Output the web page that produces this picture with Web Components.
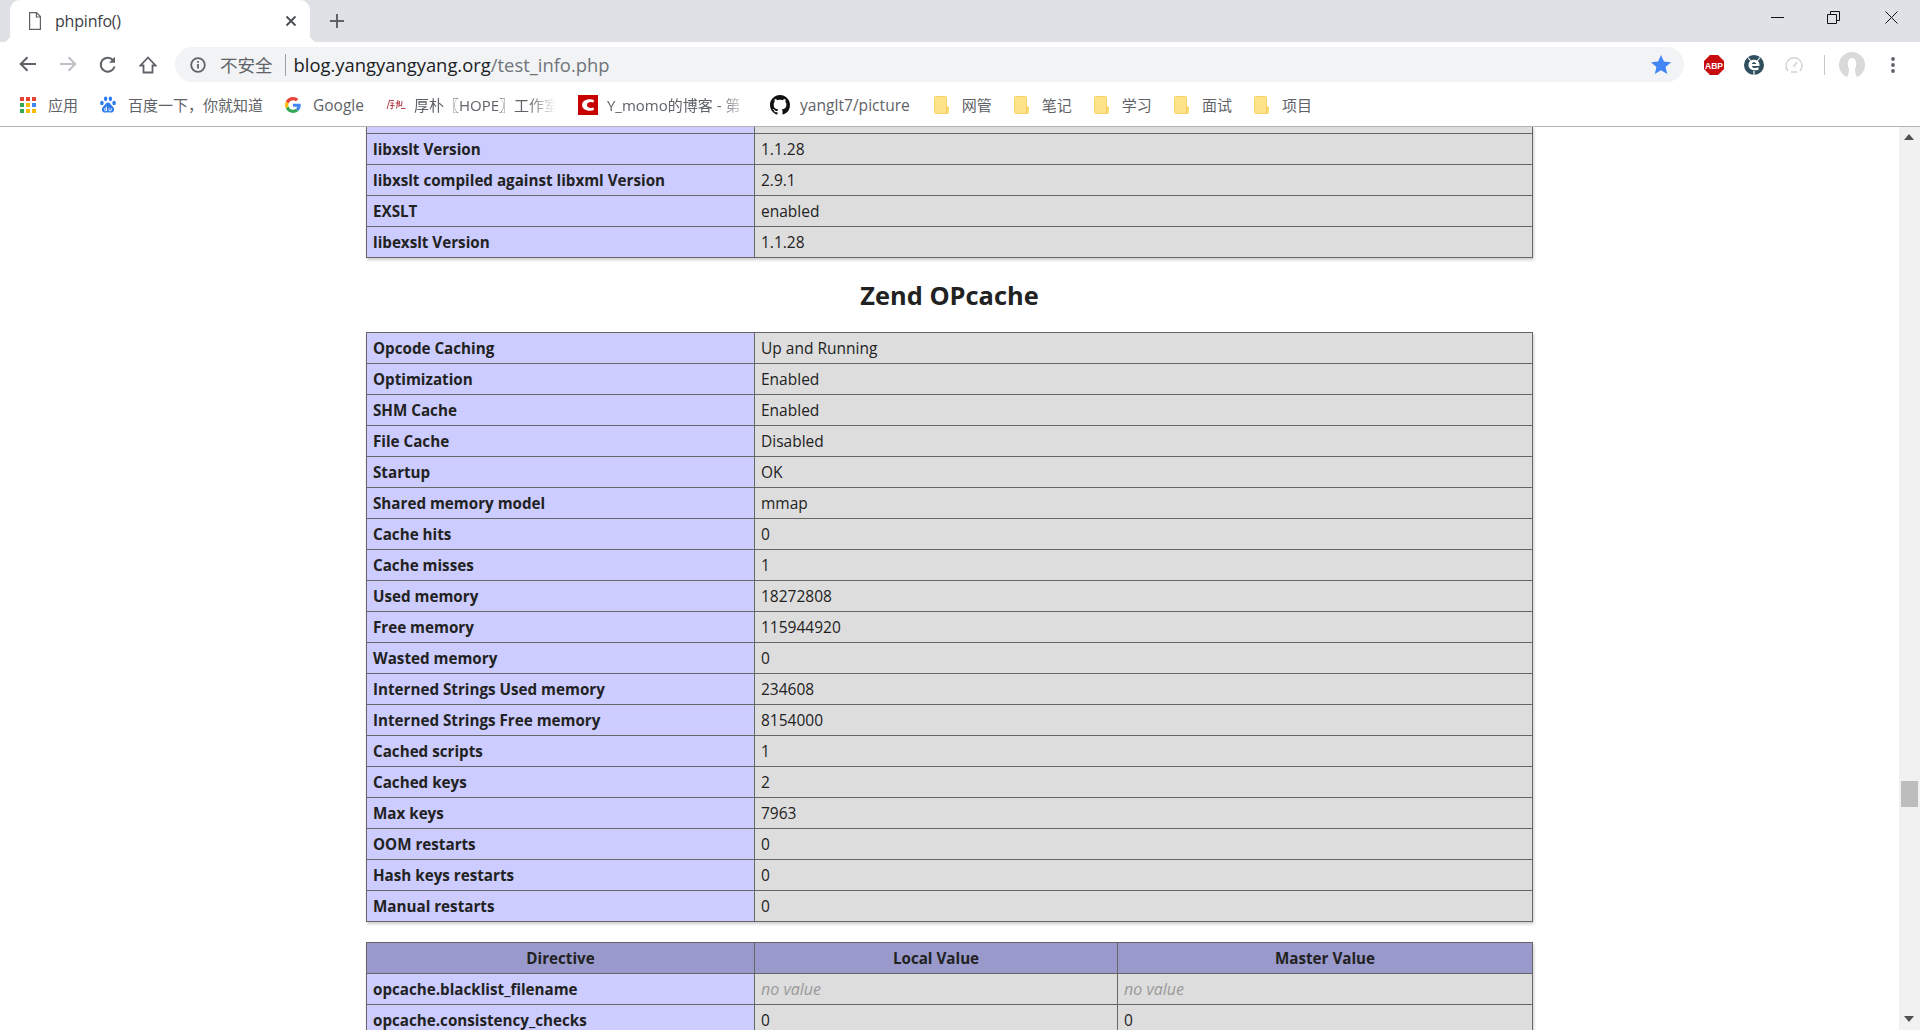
<!DOCTYPE html>
<html>
<head>
<meta charset="utf-8">
<title>phpinfo()</title>
<style>
html, body { margin: 0; height: 100%; overflow: hidden; background: #fff; }
body { display: flex; flex-direction: column; font-family: "Open Sans", "Noto Sans CJK SC", sans-serif; }
php-row i { color: #999; font-size: 16px; }
</style>
</head>
<body>

<tab-strip></tab-strip>
<nav-toolbar></nav-toolbar>
<bookmark-bar>
   <bookmark-item label="应用"><svg width="16" height="16" viewBox="0 0 16 16"><rect x="0" y="0" width="4" height="4" fill="#ea4335"/><rect x="6" y="0" width="4" height="4" fill="#ea4335"/><rect x="12" y="0" width="4" height="4" fill="#ea4335"/><rect x="0" y="6" width="4" height="4" fill="#34a853"/><rect x="6" y="6" width="4" height="4" fill="#fbbc05"/><rect x="12" y="6" width="4" height="4" fill="#4285f4"/><rect x="0" y="12" width="4" height="4" fill="#34a853"/><rect x="6" y="12" width="4" height="4" fill="#fbbc05"/><rect x="12" y="12" width="4" height="4" fill="#fbbc05"/></svg></bookmark-item>
   <bookmark-item label="百度一下，你就知道"><svg width="16" height="17" viewBox="0 0 16 17" fill="#2f7cf0"><ellipse cx="5.600" cy="2.800" rx="1.700" ry="2.400"/><ellipse cx="10.400" cy="2.800" rx="1.700" ry="2.400"/><ellipse cx="1.900" cy="7" rx="1.800" ry="2.300"/><ellipse cx="14.100" cy="7" rx="1.800" ry="2.300"/><path d="M8 6.500c-2 0-2.600 2-4 3.200C2.500 11 1.800 12.300 2 14c.2 1.800 1.800 2.700 3.400 2.600 1 0 1.800-.4 2.600-.4s1.600.4 2.600.4c1.600.1 3.200-.8 3.400-2.600.2-1.700-.5-3-2-4.300C10.600 8.500 10 6.500 8 6.500z"/><path d="M4.800 12.300h1.700v2.400H4.800zM6.500 10.500v4.200M9 12v2.700h2.200V12" stroke="#fff" stroke-width=".8" fill="none"/></svg></bookmark-item>
   <bookmark-item label="Google" size="15.5"><svg width="16" height="16" viewBox="0 0 48 48"><path fill="#ea4335" d="M24 9.500c3.500 0 6.700 1.200 9.200 3.600l6.900-6.900C35.900 2.400 30.500 0 24 0 14.600 0 6.500 5.400 2.600 13.200l8 6.200C12.500 13.600 17.800 9.500 24 9.500z"/><path fill="#4285f4" d="M47 24.500c0-1.600-.1-3.100-.4-4.500H24v9h12.900c-.6 3-2.200 5.500-4.800 7.200l7.700 6C44.300 38 47 31.800 47 24.500z"/><path fill="#fbbc05" d="M10.600 28.600c-.5-1.400-.8-3-.8-4.600s.3-3.200.8-4.600l-8-6.200C.9 16.500 0 20.100 0 24s.9 7.500 2.600 10.800l8-6.200z"/><path fill="#34a853" d="M24 48c6.500 0 11.900-2.100 15.800-5.800l-7.700-6c-2.100 1.400-4.900 2.300-8.100 2.300-6.200 0-11.500-4.100-13.400-9.900l-8 6.200C6.500 42.600 14.600 48 24 48z"/></svg></bookmark-item>
   <bookmark-item label="厚朴〖HOPE〗工作室" fade="142" gap="8"><svg width="20" height="11" viewBox="0 0 20 11" fill="none" stroke="#b8404a" stroke-width="1"><path d="M3 1.500h5M3.500 1.500L1 10M4.500 4h3l-1.500 1.500M4 6.500h4.500M6.500 5.500l-.5 4.500L4.500 9.500M12 1l-1.500 8.500M9.500 4h4.500M13.500 2l-.7 6M12.800 6l3 1M16 2l-.5 5M15 9.500h4.500"/></svg></bookmark-item>
   <bookmark-item label="Y_momo的博客 - 第" fade="141" gap="9"><svg width="20" height="20" viewBox="0 0 20 20"><rect width="20" height="20" fill="#c80000"/><path d="M16 5C12.500 3.500 4.500 4 4 10c.5 6 8.500 6.500 12 5l-.5-2.500c-2.500 1-6.500.7-6.500-2.500s4-3.500 6.500-2.500z" fill="#fff"/></svg></bookmark-item>
   <bookmark-item label="yanglt7/picture" size="15.6" gap="10" style="margin-right: 2px"><svg width="20" height="20" viewBox="0 0 16 16" fill="#111"><path d="M8 0C3.580 0 0 3.580 0 8c0 3.540 2.290 6.530 5.470 7.590.4.070.55-.17.55-.38 0-.19-.01-.82-.01-1.490-2.010.37-2.530-.49-2.690-.94-.09-.23-.48-.94-.82-1.130-.28-.15-.68-.52-.01-.53.630-.01 1.080.58 1.230.82.720 1.210 1.870.87 2.330.66.070-.52.28-.87.510-1.070-1.780-.2-3.640-.89-3.640-3.950 0-.87.310-1.590.820-2.150-.08-.2-.36-1.020.08-2.120 0 0 .67-.21 2.200.82.640-.18 1.320-.27 2-.27s1.360.09 2 .27c1.530-1.040 2.200-.82 2.200-.82.440 1.100.16 1.920.08 2.120.51.560.82 1.270.82 2.150 0 3.070-1.870 3.750-3.650 3.950.29.250.54.730.54 1.480 0 1.070-.01 1.930-.01 2.200 0 .21.150.46.550.38A8.010 8.010 0 0 0 16 8c0-4.420-3.580-8-8-8z"/></svg></bookmark-item>
   <folder-item>网管</folder-item>
   <folder-item>笔记</folder-item>
   <folder-item>学习</folder-item>
   <folder-item>面试</folder-item>
   <folder-item>项目</folder-item>
</bookmark-bar>

<page-view>
   <php-table cols="388px 1fr" style="margin-top: -1px">
      <php-row></php-row>
      <php-row label="libxslt Version">1.1.28</php-row>
      <php-row label="libxslt compiled against libxml Version">2.9.1</php-row>
      <php-row label="EXSLT">enabled</php-row>
      <php-row label="libexslt Version">1.1.28</php-row>
   </php-table>
   <php-heading>Zend OPcache</php-heading>
   <php-table cols="388px 1fr">
      <php-row label="Opcode Caching">Up and Running</php-row>
      <php-row label="Optimization">Enabled</php-row>
      <php-row label="SHM Cache">Enabled</php-row>
      <php-row label="File Cache">Disabled</php-row>
      <php-row label="Startup">OK</php-row>
      <php-row label="Shared memory model">mmap</php-row>
      <php-row label="Cache hits">0</php-row>
      <php-row label="Cache misses">1</php-row>
      <php-row label="Used memory">18272808</php-row>
      <php-row label="Free memory">115944920</php-row>
      <php-row label="Wasted memory">0</php-row>
      <php-row label="Interned Strings Used memory">234608</php-row>
      <php-row label="Interned Strings Free memory">8154000</php-row>
      <php-row label="Cached scripts">1</php-row>
      <php-row label="Cached keys">2</php-row>
      <php-row label="Max keys">7963</php-row>
      <php-row label="OOM restarts">0</php-row>
      <php-row label="Hash keys restarts">0</php-row>
      <php-row label="Manual restarts">0</php-row>
   </php-table>
   <php-table cols="388px 363px 1fr" style="margin-top: 20px">
      <php-row head label="Directive"><span>Local Value</span><span>Master Value</span></php-row>
      <php-row label="opcache.blacklist_filename"><i>no value</i><i>no value</i></php-row>
      <php-row label="opcache.consistency_checks"><span>0</span><span>0</span></php-row>
   </php-table>
</page-view>

<script>
// Tab strip with the single tab and the window buttons
class TabStrip extends HTMLElement {
   constructor() {
      super();
      this.attachShadow({ mode: "open" });
      this.shadowRoot.innerHTML = `
         <style>
         :host { display: flex; flex: none; height: 42px; background: #dee1e6; padding-left: 10px; color: #3c4043; }
         .tab { position: relative; width: 300px; background: #fff; border-radius: 10px 10px 0 0; display: flex; align-items: center; box-sizing: border-box; padding: 0 13px 0 19px; }
         .tab::before, .tab::after { content: ""; position: absolute; bottom: 0; width: 8px; height: 8px; }
         .tab::before { left: -8px; background: radial-gradient(circle at 0 0, transparent 8px, #fff 8.5px); }
         .tab::after { right: -8px; background: radial-gradient(circle at 100% 0, transparent 8px, #fff 8.5px); }
         .title { flex: 1; margin-left: 14px; font-size: 16px; letter-spacing: -.2px; }
         .plus { margin: 13px 0 0 19px; height: 16px; }
         .spacer { flex: 1; }
         .win { display: flex; height: 34px; align-items: center; }
         .win svg { display: block; }
         </style>
         <div class="tab">
            <svg width="12" height="18" viewBox="0 0 12 18" fill="none" stroke="#5f6368" stroke-width="1.200"><path d="M.6.6h7l3.800 4v12.800H.6zM7.400.6v4.400h4"/></svg>
            <span class="title">phpinfo()</span>
            <svg width="12" height="12" viewBox="0 0 12 12" stroke="#4a4d51" stroke-width="1.800"><path d="M1.500 1.500l9 9M10.500 1.500l-9 9"/></svg>
         </div>
         <svg class="plus" width="16" height="16" viewBox="0 0 16 16" stroke="#5f6368" stroke-width="2"><path d="M8 1v14M1 8h14"/></svg>
         <div class="spacer"></div>
         <div class="win">
            <svg style="margin-right:43px" width="13" height="13" viewBox="0 0 13 13" stroke="#111" fill="none"><path d="M0 6.500h13"/></svg>
            <svg style="margin-right:45px" width="13" height="13" viewBox="0 0 13 13" stroke="#111" fill="none"><path d="M.5 3.500h9v9h-9zM3.500 3.500v-3h9v9h-3"/></svg>
            <svg style="margin-right:22px" width="13" height="13" viewBox="0 0 13 13" stroke="#111" fill="none"><path d="M.5.500l12 12M12.500.500l-12 12"/></svg>
         </div>
      `;
   }
}
customElements.define("tab-strip", TabStrip);

// Back, forward, reload, home, address box and extension icons
class NavToolbar extends HTMLElement {
   constructor() {
      super();
      this.attachShadow({ mode: "open" });
      this.shadowRoot.innerHTML = `
         <style>
         :host { display: flex; flex: none; align-items: center; height: 46px; box-sizing: border-box; padding-bottom: 1px; background: #fff; }
         svg { display: block; flex: none; }
         .btn { width: 40px; display: flex; justify-content: center; }
         .nav { display: flex; padding-left: 8px; width: 175px; box-sizing: border-box; }
         .omni { display: flex; align-items: center; width: 1509px; height: 35px; background: #f1f3f4; border-radius: 18px; box-sizing: border-box; padding: 0 13px 0 15px; font-size: 18.4px; white-space: nowrap; }
         .label { margin-left: 14px; font-size: 17.5px; color: #5f6368; }
         .sep { width: 1px; height: 22px; background: #9aa0a6; margin: 0 8px 0 12px; }
         .url { color: #202124; flex: 1; }
         .url span { color: #70757a; }
         .ext { display: flex; align-items: center; margin-left: 20px; }
         .rule { width: 1px; height: 20px; background: #c8c8c8; }
         </style>
         <div class="nav">
            <div class="btn"><svg width="18" height="16" viewBox="0 0 18 16" fill="none" stroke="#5f6368" stroke-width="2"><path d="M17 8H2M8.500 1.200L1.700 8l6.800 6.800"/></svg></div>
            <div class="btn"><svg width="18" height="16" viewBox="0 0 18 16" fill="none" stroke="#bdc1c6" stroke-width="2"><path d="M1 8h15M9.500 1.200L16.300 8l-6.800 6.800"/></svg></div>
            <div class="btn"><svg width="18" height="18" viewBox="0 0 18 18" fill="none" stroke="#5f6368" stroke-width="2"><path d="M15.500 10.500A7 7 0 1 1 14 4"/><path d="M16 .8v6h-6z" fill="#5f6368" stroke="none"/></svg></div>
            <div class="btn"><svg width="18" height="18" viewBox="0 0 18 18" fill="none" stroke="#5f6368" stroke-width="1.800"><path d="M9 1.500L1.500 9.500H4.500v7h9v-7h3z"/></svg></div>
         </div>
         <div class="omni">
            <svg width="16" height="16" viewBox="0 0 16 16" fill="none" stroke="#5f6368" stroke-width="1.800"><circle cx="8" cy="8" r="6.800"/><path d="M8 7v4.500M8 4v1.800"/></svg>
            <span class="label">不安全</span>
            <span class="sep"></span>
            <span class="url">blog.yangyangyang.org<span>/test_info.php</span></span>
            <svg width="20" height="19" viewBox="0 0 20 19" fill="#4285f4"><path d="M10 0l2.900 6.600 7.100.7-5.400 4.700 1.600 7L10 15.300 3.800 19l1.600-7L0 7.300l7.100-.7z"/></svg>
         </div>
         <div class="ext">
            <svg width="20" height="20" viewBox="0 0 20 20"><path d="M6 0h8l6 6v8l-6 6H6l-6-6V6z" fill="#c70d0d"/><text x="10" y="13.500" font-family="Liberation Sans" font-size="9.500" font-weight="700" fill="#fff" text-anchor="middle" textLength="18" lengthAdjust="spacingAndGlyphs">ABP</text></svg>
         </div>
         <div class="ext">
            <svg width="20" height="20" viewBox="0 0 20 20"><circle cx="10" cy="10" r="10" fill="#2f4f5f"/><path d="M4 2.500l2.800 3.500M16 2.500l-2.800 3.500M10 16v4" stroke="#fff" stroke-width="1.200"/><path d="M15.500 11H7.800c.4 2 3.200 2.700 6.700 1.300v2.500c-4.800 1.600-10-.2-10-4.800 0-4.700 5.300-6.400 8.600-4.500 1.800 1 2.700 3 2.400 5.500zM7.800 9h4.300c-.2-2.200-3.900-2.200-4.300 0z" fill="#fff"/></svg>
         </div>
         <div class="ext">
            <svg width="20" height="18" viewBox="0 0 20 18" fill="none" stroke="#d2d4d6" stroke-width="1.500"><path d="M4 15A8 8 0 1 1 16 15"/><path d="M9.500 11l3.500-5M7 16h6"/></svg>
         </div>
         <div class="ext"><div class="rule"></div></div>
         <div class="ext" style="margin-left:14px">
            <svg width="26" height="26" viewBox="0 0 26 26"><circle cx="13" cy="13" r="13" fill="#d9d9d9"/><path d="M8 26c1-4 2-5 2-9-2-4-2-11 3-11s5 7 3 11c0 4 1 5 2 9z" fill="#fff"/></svg>
         </div>
         <div class="ext" style="margin-left:26px">
            <svg width="4" height="16" viewBox="0 0 4 16" fill="#5f6368"><circle cx="2" cy="2" r="1.900"/><circle cx="2" cy="8" r="1.900"/><circle cx="2" cy="14" r="1.900"/></svg>
         </div>
      `;
   }
}
customElements.define("nav-toolbar", NavToolbar);

class BookmarkBar extends HTMLElement {
   constructor() {
      super();
      this.attachShadow({ mode: "open" });
      this.shadowRoot.innerHTML = `
         <style>
         :host { display: flex; flex: none; align-items: center; height: 39px; box-sizing: border-box; padding: 0 0 5px 20px; background: #fff; border-bottom: 1px solid #b4b4b4; gap: 22px; color: #5f6368; font-size: 15px; white-space: nowrap; }
         </style>
         <slot></slot>
      `;
   }
}
customElements.define("bookmark-bar", BookmarkBar);

class BookmarkItem extends HTMLElement {
   constructor() {
      super();
      this.attachShadow({ mode: "open" });
      const fade = this.getAttribute("fade");
      const size = this.getAttribute("size");
      const maskCss = fade ? `width:${fade}px;overflow:hidden;-webkit-mask-image:linear-gradient(to right,#000 80%,transparent);` : "";
      const sizeCss = size ? `font-size:${size}px;` : "";
      this.shadowRoot.innerHTML = `
         <style>
         :host { display: flex; align-items: center; gap: ${this.getAttribute("gap") || 12}px; }
         ::slotted(svg) { display: block; flex: none; }
         </style>
         <slot></slot>
         <span style="${maskCss}${sizeCss}">${this.getAttribute("label")}</span>
      `;
   }
}
customElements.define("bookmark-item", BookmarkItem);

// Yellow bookmark folder
class FolderItem extends HTMLElement {
   constructor() {
      super();
      this.attachShadow({ mode: "open" });
      this.shadowRoot.innerHTML = `
         <style>
         :host { display: flex; align-items: center; gap: 13px; }
         svg { display: block; }
         </style>
         <svg width="15" height="18" viewBox="0 0 15 18"><path d="M1.500.5h10a1 1 0 0 1 1 1V11h2v5.500a1 1 0 0 1-1 1H1.500a1 1 0 0 1-1-1v-15a1 1 0 0 1 1-1z" fill="#fee38b" stroke="#f5d465"/><path d="M12.500 11v6" stroke="#f0ca52"/></svg>
         <slot></slot>
      `;
   }
}
customElements.define("folder-item", FolderItem);

// Scrolled page area, the scrollbar is painted here
class PageView extends HTMLElement {
   constructor() {
      super();
      this.attachShadow({ mode: "open" });
      this.shadowRoot.innerHTML = `
         <style>
         :host { display: flex; flex: 1; min-height: 0; overflow: hidden; background: #fff; color: #222; }
         .content { flex: 1; min-width: 0; overflow: hidden; padding: 0 366px; box-sizing: border-box; }
         .bar { flex: none; width: 21px; background: #f1f1f1; position: relative; }
         .up, .down { position: absolute; left: 5px; width: 0; height: 0; border-left: 5px solid transparent; border-right: 5px solid transparent; }
         .up { top: 7px; border-bottom: 6px solid #505050; }
         .down { bottom: 8px; border-top: 6px solid #505050; }
         .thumb { position: absolute; left: 2px; right: 2px; top: 654px; height: 26px; background: #bdbdbd; }
         </style>
         <div class="content"><slot></slot></div>
         <div class="bar"><div class="up"></div><div class="thumb"></div><div class="down"></div></div>
      `;
   }
}
customElements.define("page-view", PageView);

class PhpHeading extends HTMLElement {
   constructor() {
      super();
      this.attachShadow({ mode: "open" });
      this.shadowRoot.innerHTML = `
         <style>
         :host { display: block; height: 74px; line-height: 74px; text-align: center; font-size: 25.400px; font-weight: 700; color: #222; }
         </style>
         <slot></slot>
      `;
   }
}
customElements.define("php-heading", PhpHeading);

class PhpTable extends HTMLElement {
   constructor() {
      super();
      this.attachShadow({ mode: "open" });
      this.shadowRoot.innerHTML = `
         <style>
         :host { display: block; box-shadow: 1px 2px 3px #ccc; --cols: ${this.getAttribute("cols")}; }
         </style>
         <slot></slot>
      `;
   }
}
customElements.define("php-table", PhpTable);

// A row: label in the first cell, slotted children or text for the others
class PhpRow extends HTMLElement {
   constructor() {
      super();
      this.attachShadow({ mode: "open" });
      const label = this.getAttribute("label");
      const isHead = this.hasAttribute("head");
      this.shadowRoot.innerHTML = `
         <style>
         :host { display: grid; grid-template-columns: var(--cols); background: #ddd; font-size: 15.500px; line-height: 30px; }
         :host(:empty) { height: 7px; }
         .e { background: #ccf; font-weight: 700; padding: 0 6px; font-size: 15.200px; }
         .h { background: #99c; font-weight: 700; text-align: center; font-size: 15.200px; }
         .cell { border: solid #666; border-width: 1px 0 0 1px; }
         :host(:last-child) .cell { border-bottom: 1px solid #666; }
         </style>
         <div class="cell ${isHead ? "h" : "e"}">${label || ""}</div>
         <div id="values" style="display:contents"></div>
      `;
   }

   connectedCallback() {
      // Each child becomes a cell; plain text goes to one default slot
      const kids = this.children.length ? Array.from(this.children) : [null];
      const values = this.shadowRoot.getElementById("values");
      const isHead = this.hasAttribute("head");
      kids.forEach((kid, i) => {
         const cell = document.createElement("php-cell");
         if (isHead) cell.setAttribute("head", "");
         if (i == kids.length - 1) cell.setAttribute("last", "");
         if (this.matches(":last-child")) cell.setAttribute("bottom", "");
         const slot = document.createElement("slot");
         if (kid) {
            slot.name = "c" + i;
            kid.slot = "c" + i;
         }
         cell.appendChild(slot);
         values.appendChild(cell);
      });
   }
}

class PhpCell extends HTMLElement {
   constructor() {
      super();
      this.attachShadow({ mode: "open" });
      this.shadowRoot.innerHTML = `
         <style>
         :host { display: block; background: #ddd; padding: 0 6px; border: solid #666; border-width: 1px 0 0 1px; min-width: 0; }
         :host([head]) { background: #99c; font-weight: 700; text-align: center; font-size: 15.200px; }
         :host([last]) { border-right-width: 1px; }
         :host([bottom]) { border-bottom-width: 1px; }
         </style>
         <slot></slot>
      `;
   }
}
customElements.define("php-cell", PhpCell);
customElements.define("php-row", PhpRow);
</script>
</body>
</html>
